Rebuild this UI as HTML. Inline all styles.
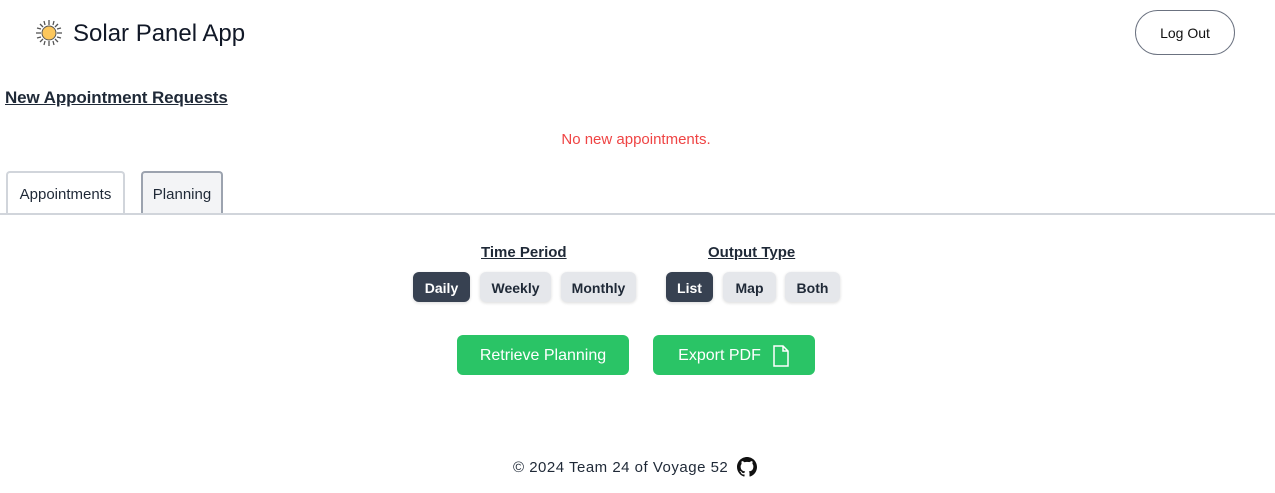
<!DOCTYPE html>
<html><head><style>
*{box-sizing:border-box;margin:0;padding:0}
body{width:1275px;height:493px;background:#fff;font-family:"Liberation Sans",sans-serif;color:#1f2937;position:relative;overflow:hidden}
.abs{position:absolute}
.btn{position:absolute;border-radius:6px;font-size:14px;font-weight:bold;display:flex;align-items:center;justify-content:center;background:#e5e7eb;color:#1f2937;height:30px;top:272px;padding-top:2px;box-shadow:0 1px 3px rgba(0,0,0,.15)}
.dark{background:#374151;color:#fff}
.green{position:absolute;top:335px;height:40px;background:#2ac466;color:#fff;border-radius:6px;font-size:16px;display:flex;align-items:center;justify-content:center;padding-top:2px}
.lbl{position:absolute;top:244px;font-size:15px;font-weight:bold;text-decoration:underline;color:#1f2937}
</style></head><body>
<svg class="abs" style="left:35px;top:19px" width="28" height="28" viewBox="0 0 28 28">
<g stroke="#555" stroke-width="1.3"><line x1="14" y1="1" x2="14" y2="6"/><line x1="14" y1="22" x2="14" y2="27"/><line x1="1" y1="14" x2="6" y2="14"/><line x1="22" y1="14" x2="27" y2="14"/><line x1="5" y1="5" x2="8" y2="8"/><line x1="20" y1="20" x2="23" y2="23"/><line x1="5" y1="23" x2="8" y2="20"/><line x1="20" y1="8" x2="23" y2="5"/><line x1="9" y1="2" x2="10" y2="6"/><line x1="19" y1="2" x2="18" y2="6"/><line x1="9" y1="26" x2="10" y2="22"/><line x1="19" y1="26" x2="18" y2="22"/><line x1="2" y1="9" x2="6" y2="10"/><line x1="2" y1="19" x2="6" y2="18"/><line x1="26" y1="9" x2="22" y2="10"/><line x1="26" y1="19" x2="22" y2="18"/></g>
<circle cx="14" cy="14" r="7" fill="#fcc75d" stroke="#555" stroke-width="1"/></svg>
<div class="abs" style="left:73px;top:20px;font-size:24px;color:#111827">Solar Panel App</div>
<div class="abs" style="left:1135px;top:10px;width:100px;height:45px;border:1px solid #6b7280;border-radius:23px;display:flex;align-items:center;justify-content:center;font-size:14px;color:#111">Log Out</div>
<div class="abs" style="left:5px;top:88px;font-size:17px;font-weight:bold;text-decoration:underline;color:#1f2937;letter-spacing:-0.1px">New Appointment Requests</div>
<div class="abs" style="left:0;width:1272px;top:131px;text-align:center;font-size:15px;color:#ef4444">No new appointments.</div>
<div class="abs" style="left:6px;top:171px;width:119px;height:43px;border:2px solid #d1d5db;border-bottom:none;border-radius:4px 4px 0 0;font-size:15px;display:flex;align-items:center;justify-content:center;padding-top:2px">Appointments</div>
<div class="abs" style="left:141px;top:171px;width:82px;height:43px;border:2px solid #9ca3af;border-bottom:none;border-radius:4px 4px 0 0;background:#f3f4f6;font-size:15px;display:flex;align-items:center;justify-content:center;padding-top:2px">Planning</div>
<div class="abs" style="left:0;top:213px;width:1275px;height:2px;background:#d1d5db"></div>
<div class="lbl" style="left:481px">Time Period</div>
<div class="lbl" style="left:708px">Output Type</div>
<div class="btn dark" style="left:413px;width:57px">Daily</div>
<div class="btn" style="left:480px;width:71px">Weekly</div>
<div class="btn" style="left:561px;width:75px">Monthly</div>
<div class="btn dark" style="left:666px;width:47px">List</div>
<div class="btn" style="left:723px;width:53px">Map</div>
<div class="btn" style="left:785px;width:55px">Both</div>
<div class="green" style="left:457px;width:172px">Retrieve Planning</div>
<div class="green" style="left:653px;width:162px">Export PDF<svg style="margin-left:11px" width="18" height="22" viewBox="0 0 18 22"><path d="M2 1h9l5 5v15H2z M11 1v5h5" fill="none" stroke="#fff" stroke-width="1.5"/></svg></div>
<div class="abs" style="left:513px;top:459px;font-size:15px;color:#1f2937;letter-spacing:0.5px">© 2024 Team 24 of Voyage 52</div>
<svg class="abs" style="left:737px;top:457px" width="20" height="20" viewBox="0 0 16 16"><path fill="#111" d="M8 0C3.58 0 0 3.580 0 8c0 3.54 2.29 6.530 5.47 7.590.4.07.55-.17.55-.38v-1.33c-2.230.48-2.700-1.070-2.700-1.070-.36-.92-.89-1.170-.89-1.170-.73-.5.06-.49.06-.49.8.06 1.230.83 1.230.83.71 1.220 1.870.87 2.330.66.07-.52.28-.87.5-1.070-1.780-.2-3.640-.89-3.640-3.950 0-.87.31-1.590.82-2.150-.08-.2-.36-1.020.08-2.120 0 0 .67-.21 2.200.82A7.600 7.600 0 0 1 8 3.870c.68 0 1.360.09 2 .27 1.530-1.040 2.200-.82 2.200-.82.44 1.100.16 1.920.08 2.120.51.56.82 1.270.82 2.150 0 3.070-1.870 3.750-3.650 3.950.29.25.54.73.54 1.480v2.200c0 .21.15.46.55.38A8 8 0 0 0 16 8c0-4.420-3.580-8-8-8z"/></svg>
</body></html>
